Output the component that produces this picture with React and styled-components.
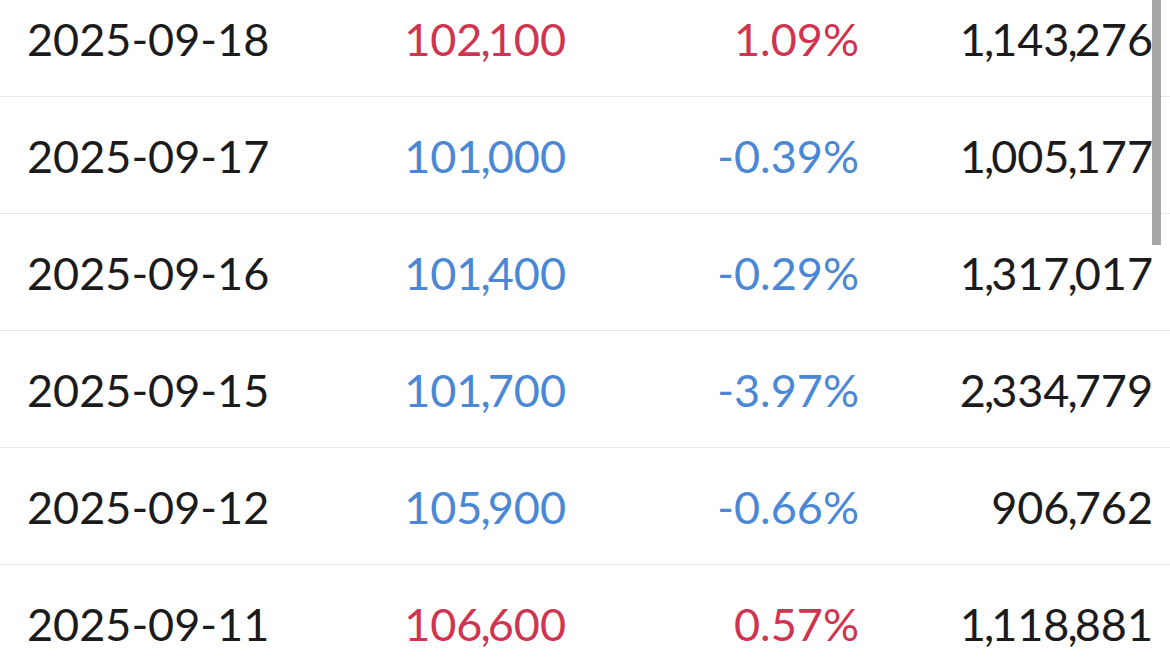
import React from 'react';
import styled, { createGlobalStyle } from 'styled-components';

// Daily price table, scrolled a little past the top

const GlobalStyle = createGlobalStyle`
  html, body {
    margin: 0;
    padding: 0;
    background: #ffffff;
    overflow: hidden;
  }
`

const Viewport = styled.div`
  position: relative;
  width: 1170px;
  height: 659px;
  overflow: hidden;
  background: #ffffff;
  font-family: Lato, "Noto Sans", sans-serif;
`

const Table = styled.div`
  margin-top: -20px;
`

const Row = styled.div`
  display: grid;
  grid-template-columns: 366px 173px 293px 294px;
  align-items: center;
  height: 116px;
  padding: 0 17px 0 27px;
  border-bottom: 1px solid #e6e6e6;
  font-size: 45px;
  line-height: 1;
  color: #1b1b1b;
`

const Cell = styled.div`
  text-align: ${p => (p.$align === 'left' ? 'left' : 'right')};
  color: ${p => p.$color || 'inherit'};
  padding-top: 3px;
  white-space: nowrap;
`

// the thousands separator sits tighter than Lato's default comma
const Sep = styled.span`
  margin-left: -2px;
  letter-spacing: -3px;
`

const ScrollThumb = styled.div`
  position: absolute;
  top: 0;
  right: 9px;
  width: 9px;
  height: 245px;
  background: #a7a7a7;
`

const RED = '#cf3450';
const BLUE = '#4a88d6';

const rows = [
  { date: '2025-09-22', price: '102,400', change: '0.29%', volume: '1,002,431' },
  { date: '2025-09-18', price: '102,100', change: '1.09%', volume: '1,143,276' },
  { date: '2025-09-17', price: '101,000', change: '-0.39%', volume: '1,005,177' },
  { date: '2025-09-16', price: '101,400', change: '-0.29%', volume: '1,317,017' },
  { date: '2025-09-15', price: '101,700', change: '-3.97%', volume: '2,334,779' },
  { date: '2025-09-12', price: '105,900', change: '-0.66%', volume: '906,762' },
  { date: '2025-09-11', price: '106,600', change: '0.57%', volume: '1,118,881' },
];

const grouped = (str) => {
  const parts = str.split(',');
  return parts.map((part, i) => (
    <React.Fragment key={i}>
      {part}
      {i < parts.length - 1 && <Sep>,</Sep>}
    </React.Fragment>
  ));
};

const App = () => {
  // first row sits above the fold
  const visible = rows.slice(1);
  return (
    <Viewport>
      <GlobalStyle />
      <Table>
        {visible.map(row => {
          const color = row.change.startsWith('-') ? BLUE : RED;
          return (
            <Row key={row.date}>
              <Cell $align="left">{row.date}</Cell>
              <Cell $color={color}>{grouped(row.price)}</Cell>
              <Cell $color={color}>{row.change}</Cell>
              <Cell>{grouped(row.volume)}</Cell>
            </Row>
          );
        })}
      </Table>
      <ScrollThumb />
    </Viewport>
  );
};

export default App;
